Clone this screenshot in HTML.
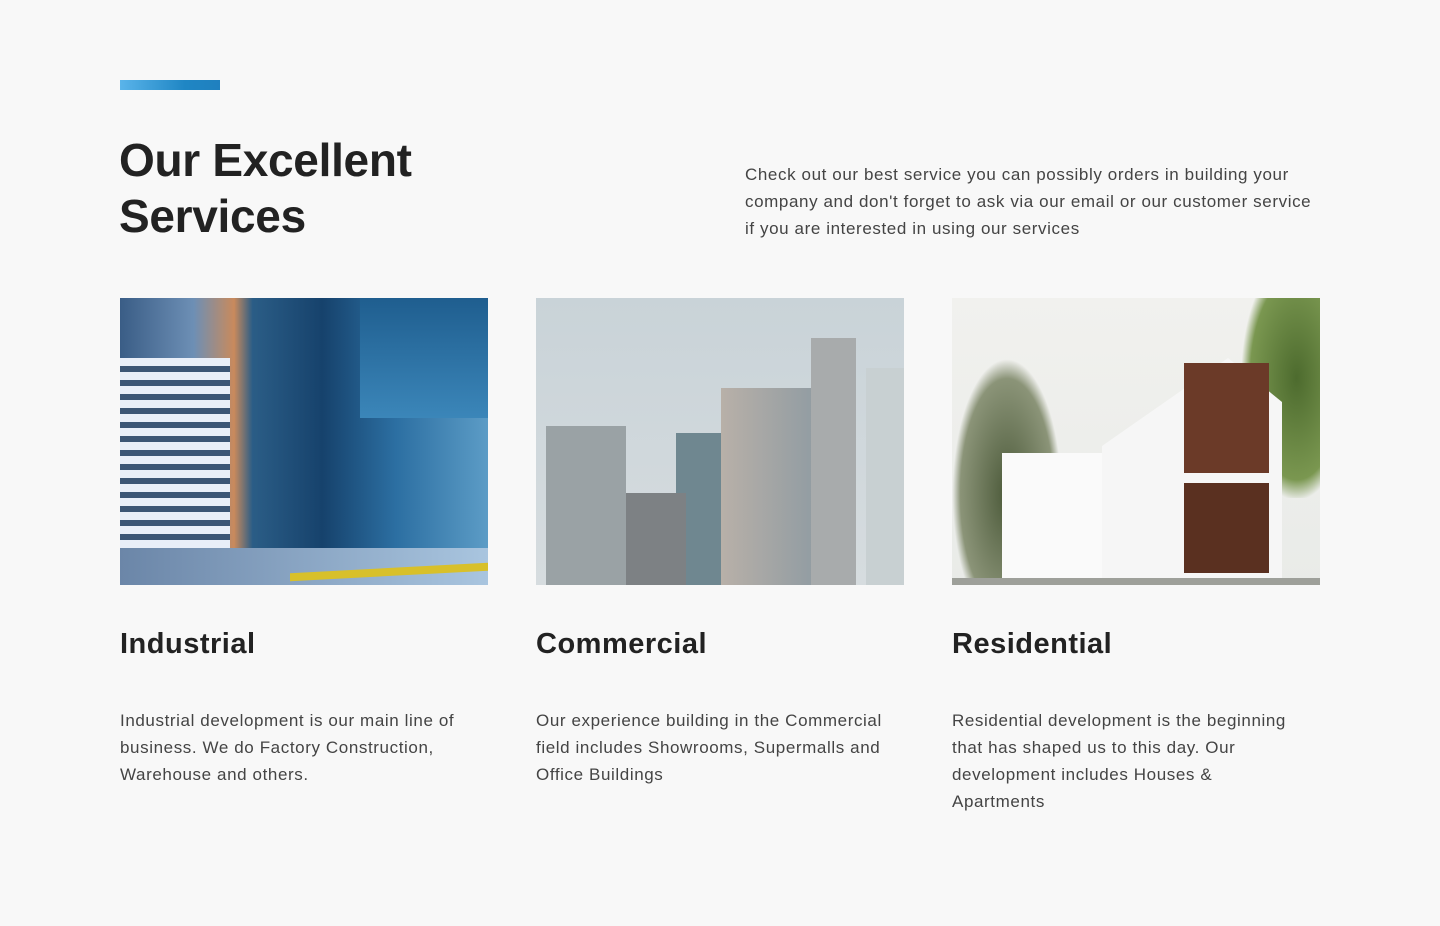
<!DOCTYPE html>
<html><head><meta charset="utf-8"><style>
*{margin:0;padding:0;box-sizing:border-box}
body{width:1440px;height:926px;background:#f8f8f8;font-family:"Liberation Sans",sans-serif;color:#222;position:relative;overflow:hidden}
.bar{position:absolute;left:120px;top:80px;width:100px;height:10px;background:linear-gradient(90deg,#5ab4ea,#1f86c4 65%,#1f80bf)}
h1{position:absolute;left:119px;top:132px;font-size:46px;line-height:56px;font-weight:700;letter-spacing:-0.3px;color:#222}
.intro{position:absolute;left:745px;top:161px;width:640px;font-size:17px;line-height:27px;color:#444;white-space:nowrap;letter-spacing:0.6px}
.img{position:absolute;top:298px;width:368px;height:287px;overflow:hidden}
h3{position:absolute;top:628px;font-size:29px;font-weight:700;color:#222;letter-spacing:0.5px}
.d{position:absolute;top:707px;width:400px;font-size:17px;line-height:27px;color:#444;white-space:nowrap;letter-spacing:0.6px}
</style></head><body>
<div class="bar"></div>
<h1>Our Excellent<br>Services</h1>
<p class="intro">Check out our best service you can possibly orders in building your<br>company and don't forget to ask via our email or our customer service<br>if you are interested in using our services</p>

<div class="img" style="left:120px;background:linear-gradient(90deg,#3a5d86 0%,#6d8fb5 20%,#c98a5c 31%,#2b5d86 36%,#16426c 55%,#2c6fa2 75%,#5c9cc6 100%)">
<div style="position:absolute;left:0;top:60px;width:110px;height:210px;background:repeating-linear-gradient(180deg,#e8eef8 0 8px,#3b5575 8px 14px)"></div>
<div style="position:absolute;left:240px;top:0;width:128px;height:120px;background:linear-gradient(180deg,#1f5e8f,#3b86b9)"></div>
<div style="position:absolute;left:0;top:250px;width:368px;height:37px;background:linear-gradient(90deg,#6b86a8,#a9c5df)"></div>
<div style="position:absolute;left:170px;top:270px;width:198px;height:8px;background:#d8c02a;transform:skewY(-3deg)"></div>
</div>

<div class="img" style="left:536px;background:linear-gradient(180deg,#c9d3d8,#d6dcdf)">
<div style="position:absolute;left:10px;top:128px;width:80px;height:159px;background:#9aa2a5"></div>
<div style="position:absolute;left:140px;top:135px;width:50px;height:152px;background:#6f8790"></div>
<div style="position:absolute;left:185px;top:90px;width:100px;height:197px;background:linear-gradient(90deg,#b8b0a8,#8f9ba2)"></div>
<div style="position:absolute;left:275px;top:40px;width:45px;height:247px;background:#a8abac"></div>
<div style="position:absolute;left:330px;top:70px;width:38px;height:217px;background:#c8d0d2"></div>
<div style="position:absolute;left:90px;top:195px;width:60px;height:92px;background:#7d8184"></div>
</div>

<div class="img" style="left:952px;background:linear-gradient(180deg,#f1f1ee,#e9ebe8)">
<div style="position:absolute;left:0;top:60px;width:110px;height:227px;background:radial-gradient(ellipse at 50% 60%,#4c5a3a,#8b9478 60%,transparent 70%)"></div>
<div style="position:absolute;left:290px;top:0;width:78px;height:200px;background:radial-gradient(ellipse at 70% 40%,#4d6b2e,#7a9750 60%,transparent 72%)"></div>
<div style="position:absolute;left:50px;top:155px;width:280px;height:125px;background:#fafafa"></div>
<div style="position:absolute;left:150px;top:60px;width:180px;height:220px;background:#f6f6f6;clip-path:polygon(0 40%,70% 0,100% 20%,100% 100%,0 100%)"></div>
<div style="position:absolute;left:232px;top:65px;width:85px;height:110px;background:#6b3a28"></div>
<div style="position:absolute;left:232px;top:185px;width:85px;height:90px;background:#5a3020"></div>
<div style="position:absolute;left:0;top:280px;width:368px;height:7px;background:#9ea09a"></div>
</div>

<h3 style="left:120px">Industrial</h3>
<h3 style="left:536px">Commercial</h3>
<h3 style="left:952px">Residential</h3>
<p class="d" style="left:120px">Industrial development is our main line of<br>business. We do Factory Construction,<br>Warehouse and others.</p>
<p class="d" style="left:536px">Our experience building in the Commercial<br>field includes Showrooms, Supermalls and<br>Office Buildings</p>
<p class="d" style="left:952px">Residential development is the beginning<br>that has shaped us to this day. Our<br>development includes Houses &amp;<br>Apartments</p>
</body></html>
